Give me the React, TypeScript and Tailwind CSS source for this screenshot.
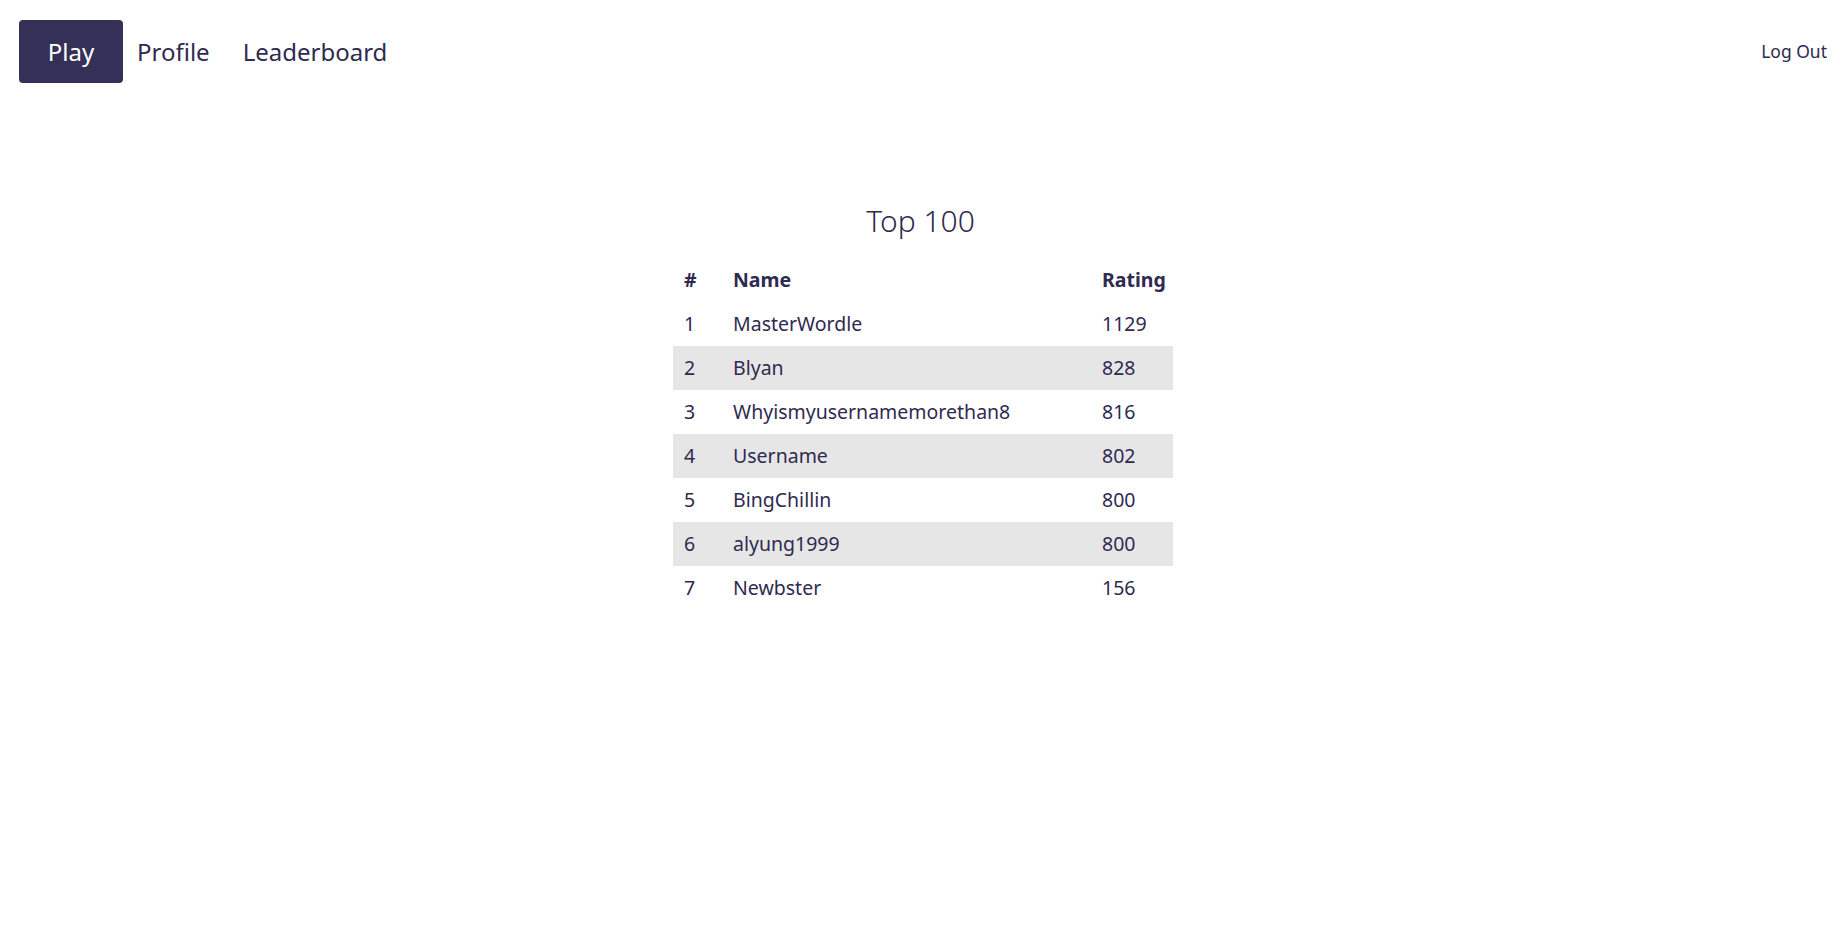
import React from "react";

const players = [
  { rank: 1, name: "MasterWordle", rating: 1129 },
  { rank: 2, name: "Blyan", rating: 828 },
  { rank: 3, name: "Whyismyusernamemorethan8", rating: 816 },
  { rank: 4, name: "Username", rating: 802 },
  { rank: 5, name: "BingChillin", rating: 800 },
  { rank: 6, name: "alyung1999", rating: 800 },
  { rank: 7, name: "Newbster", rating: 156 },
];

function NavBar() {
  return (
    <nav className="flex items-center justify-between pl-[19px] pr-[14px] pt-[20px]">
      <div className="flex items-center text-[24px]">
        <a className="flex h-[63px] w-[104px] items-center justify-center rounded-[4px] bg-[#353058] text-white">
          Play
        </a>
        <a className="pl-[14px] pr-[18px] text-[#2f2a50]">Profile</a>
        <a className="px-[15px] text-[#2f2a50]">Leaderboard</a>
      </div>
      <a className="text-[17.5px] text-[#2f2a50]">Log Out</a>
    </nav>
  );
}

function Leaderboard() {
  return (
    <div className="mt-[123px] flex flex-col items-center">
      <h1 className="text-[30px] font-light leading-none text-[#2f2a50]">Top 100</h1>
      <table className="ml-[5px] mt-[22px] w-[500px] table-fixed border-collapse text-[19.5px] text-[#2f2a50]">
        <thead>
          <tr className="h-[44px] text-left font-bold">
            <th className="w-[49px] px-[11px]">#</th>
            <th className="px-[11px]">Name</th>
            <th className="w-[82px] px-[11px]">Rating</th>
          </tr>
        </thead>
        <tbody>
          {players.map((p) => (
            <tr key={p.rank} className={p.rank % 2 === 0 ? "h-[44px] bg-[#e6e6e6]" : "h-[44px]"}>
              <td className="px-[11px]">{p.rank}</td>
              <td className="px-[11px]">{p.name}</td>
              <td className="px-[11px]">{p.rating}</td>
            </tr>
          ))}
        </tbody>
      </table>
    </div>
  );
}

export default function App() {
  return (
    <div className="min-h-[938px] bg-white font-['Noto_Sans',sans-serif]">
      <NavBar />
      <Leaderboard />
    </div>
  );
}
